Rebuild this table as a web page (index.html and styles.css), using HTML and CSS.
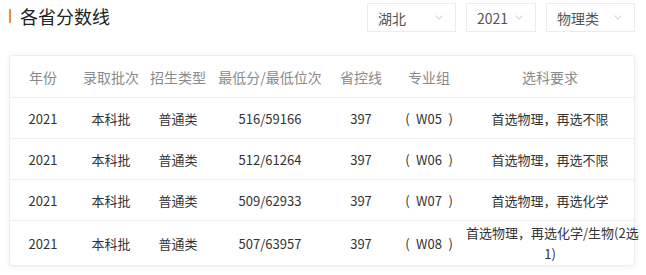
FILE: index.html
```html
<!DOCTYPE html>
<html lang="zh">
<head>
<meta charset="utf-8">
<title>各省分数线</title>
<link rel="stylesheet" href="styles.css">
</head>
<body>
<div class="top">
  <h2 class="title"><span class="bar"></span>各省分数线</h2>
  <div class="filters">
    <div class="select w89"><span>湖北</span><svg class="arrow" viewBox="0 0 8 5" width="8" height="5"><path d="M0.5 0.5 L4 4.2 L7.5 0.5" fill="none" stroke="#c8c8c8" stroke-width="1"/></svg></div>
    <div class="select w70"><span>2021</span><svg class="arrow" viewBox="0 0 8 5" width="8" height="5"><path d="M0.5 0.5 L4 4.2 L7.5 0.5" fill="none" stroke="#c8c8c8" stroke-width="1"/></svg></div>
    <div class="select w89"><span>物理类</span><svg class="arrow" viewBox="0 0 8 5" width="8" height="5"><path d="M0.5 0.5 L4 4.2 L7.5 0.5" fill="none" stroke="#c8c8c8" stroke-width="1"/></svg></div>
  </div>
</div>
<div class="card">
  <table class="score">
    <colgroup>
      <col class="c1"><col class="c2"><col class="c3"><col class="c4"><col class="c5"><col class="c6"><col class="c7">
    </colgroup>
    <thead>
      <tr><th>年份</th><th>录取批次</th><th>招生类型</th><th>最低分/最低位次</th><th>省控线</th><th>专业组</th><th>选科要求</th></tr>
    </thead>
    <tbody>
      <tr><td>2021</td><td>本科批</td><td>普通类</td><td>516/59166</td><td>397</td><td>(&ensp;W05&ensp;)</td><td>首选物理，再选不限</td></tr>
      <tr><td>2021</td><td>本科批</td><td>普通类</td><td>512/61264</td><td>397</td><td>(&ensp;W06&ensp;)</td><td>首选物理，再选不限</td></tr>
      <tr><td>2021</td><td>本科批</td><td>普通类</td><td>509/62933</td><td>397</td><td>(&ensp;W07&ensp;)</td><td>首选物理，再选化学</td></tr>
      <tr class="last"><td>2021</td><td>本科批</td><td>普通类</td><td>507/63957</td><td>397</td><td>(&ensp;W08&ensp;)</td><td>首选物理，再选化学/生物(2选<br>1)</td></tr>
    </tbody>
  </table>
</div>
</body>
</html>
```
FILE: styles.css
```css
html, body {
  margin: 0;
  padding: 0;
  background: #fff;
}
body {
  font-family: "Noto Sans CJK SC", "Noto Sans", sans-serif;
  color: #333;
  width: 646px;
  height: 275px;
  overflow: hidden;
}
.top {
  display: flex;
  justify-content: space-between;
  align-items: flex-start;
  padding: 3px 11px 0 9px;
  height: 29px;
}
.title {
  margin: 0;
  display: flex;
  align-items: center;
  font-size: 18px;
  font-weight: normal;
  color: #222;
  line-height: 26px;
  height: 26px;
}
.bar {
  display: inline-block;
  width: 2px;
  height: 14px;
  background: #ef8a3f;
  margin-right: 9px;
}
.filters {
  display: flex;
  gap: 10px;
}
.select {
  box-sizing: border-box;
  height: 29px;
  border: 1px solid #ececec;
  display: flex;
  align-items: center;
  justify-content: space-between;
  padding: 0 12px 0 10px;
  font-size: 14px;
  color: #555;
}
.w89 { width: 89px; }
.w70 { width: 70px; }
.arrow { display: block; }
.card {
  margin: 23px 11px 0 9px;
  border: 1px solid #eeeeee;
  border-radius: 3px;
  box-shadow: 0 1px 6px rgba(0, 0, 0, 0.07);
  background: #fff;
}
.score {
  width: 100%;
  border-collapse: collapse;
  table-layout: fixed;
}
.c1 { width: 66px; }
.c2 { width: 70px; }
.c3 { width: 64px; }
.c4 { width: 120px; }
.c5 { width: 62px; }
.c6 { width: 74px; }
.score th {
  font-weight: normal;
  font-size: 14px;
  color: #8a8a8a;
  height: 41px;
  padding: 0;
  text-align: center;
  border-bottom: 1px solid #efefef;
  line-height: 20px;
}
.score td {
  font-size: 13px;
  color: #333;
  height: 40px;
  padding: 0;
  text-align: center;
  border-bottom: 1px solid #efefef;
  line-height: 21px;
  white-space: nowrap;
}
.score tr.last td {
  border-bottom: none;
  height: 44px;
}
```
